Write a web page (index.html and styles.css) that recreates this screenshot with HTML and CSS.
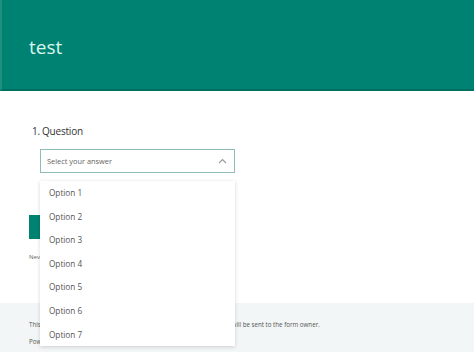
FILE: index.html
```html
<!DOCTYPE html>
<html lang="en">
<head>
    <meta charset="UTF-8">
    <meta name="viewport" content="width=device-width, initial-scale=1.0">
    <title>test</title>
    <link rel="stylesheet" href="styles.css">
</head>
<body>
    <div class="header">
        <h1>test</h1>
    </div>

    <div class="content">
        <div class="question">
            <div class="question-title">1.<span class="q-text">Question</span></div>
            <div class="select-wrap">
                <div class="select-box">
                    <span>Select your answer</span>
                    <svg class="chevron" width="9" height="6" viewBox="0 0 9 6">
                        <path d="M1 5 L4.5 1.5 L8 5" fill="none" stroke="#9a9a9a" stroke-width="1.1"/>
                    </svg>
                </div>
                <ul class="dropdown">
                    <li>Option 1</li>
                    <li>Option 2</li>
                    <li>Option 3</li>
                    <li>Option 4</li>
                    <li>Option 5</li>
                    <li>Option 6</li>
                    <li>Option 7</li>
                </ul>
            </div>
        </div>

        <button class="btn-submit">Submit</button>
        <p class="note">Never give out your password. Report abuse</p>
    </div>

    <div class="footer">
        <p>This content is created by the owner of the form. The data you submit will be sent to the form owner.</p>
        <p>Powered by Microsoft Forms</p>
    </div>
</body>
</html>
```

FILE: styles.css
```css
* {
    margin: 0;
    padding: 0;
    box-sizing: border-box;
}

body {
    font-family: 'Open Sans', 'Noto Sans', sans-serif;
    background: white;
    color: #333;
}

.header {
    height: 91px;
    background: #008272;
    border-left: 2px solid #1f8f80;
    border-bottom: 2px solid #006f60;
    padding: 35px 0 0 27px;
}

.header h1 {
    font-size: 19px;
    font-weight: 400;
    color: #d9f6ee;
    line-height: 24px;
}

.content {
    height: 212px;
    padding: 33px 0 0 29px;
}

.question-title {
    font-size: 10px;
    line-height: 14px;
    color: #333;
    padding-left: 3px;
    letter-spacing: -0.2px;
}

.q-text {
    margin-left: 2px;
}

.select-wrap {
    position: relative;
    margin: 11px 0 0 11px;
    width: 195px;
}

.select-box {
    height: 24px;
    border: 1px solid #8fbcb6;
    display: flex;
    align-items: center;
    justify-content: space-between;
    padding: 0 7px 0 6px;
    font-size: 7.4px;
    color: #666;
}

.chevron {
    margin-top: -1px;
}

.dropdown {
    position: absolute;
    top: 32px;
    left: 0;
    width: 195px;
    list-style: none;
    background: white;
    box-shadow: 0 1px 4px rgba(0,0,0,0.16);
    z-index: 2;
}

.dropdown li {
    height: 23.6px;
    line-height: 23.6px;
    padding-left: 9px;
    font-size: 8.2px;
    color: #555;
}

.btn-submit {
    display: block;
    margin-top: 42px;
    width: 80px;
    height: 24px;
    border: none;
    background: #008272;
    color: white;
    font-family: inherit;
    font-size: 8px;
}

.note {
    margin-top: 14px;
    font-size: 6px;
    color: #666;
}

.footer {
    height: 49px;
    background: #f2f6f6;
    padding: 13px 0 0 29px;
}

.footer p {
    font-size: 6.2px;
    line-height: 17px;
    color: #555;
}
```
